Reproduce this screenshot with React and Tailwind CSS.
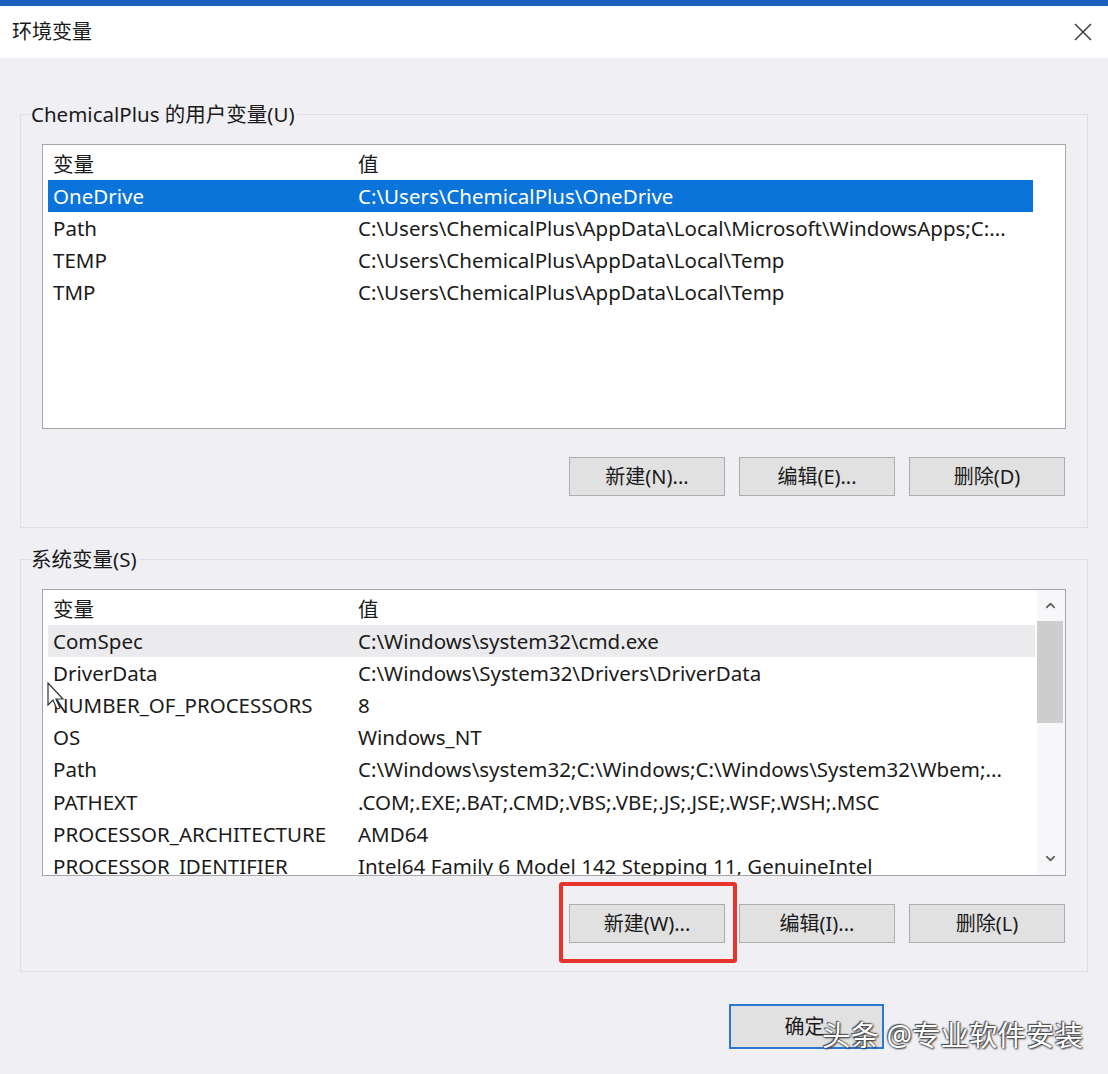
import { ChevronUp, ChevronDown } from 'lucide-react'

const FONT = "font-['Noto_Sans','Noto_Sans_CJK_SC',sans-serif]"

const USER_VARS = [
  ['OneDrive', 'C:\\Users\\ChemicalPlus\\OneDrive'],
  ['Path', 'C:\\Users\\ChemicalPlus\\AppData\\Local\\Microsoft\\WindowsApps;C:...'],
  ['TEMP', 'C:\\Users\\ChemicalPlus\\AppData\\Local\\Temp'],
  ['TMP', 'C:\\Users\\ChemicalPlus\\AppData\\Local\\Temp'],
]

const SYS_VARS = [
  ['ComSpec', 'C:\\Windows\\system32\\cmd.exe'],
  ['DriverData', 'C:\\Windows\\System32\\Drivers\\DriverData'],
  ['NUMBER_OF_PROCESSORS', '8'],
  ['OS', 'Windows_NT'],
  ['Path', 'C:\\Windows\\system32;C:\\Windows;C:\\Windows\\System32\\Wbem;...'],
  ['PATHEXT', '.COM;.EXE;.BAT;.CMD;.VBS;.VBE;.JS;.JSE;.WSF;.WSH;.MSC'],
  ['PROCESSOR_ARCHITECTURE', 'AMD64'],
  ['PROCESSOR_IDENTIFIER', 'Intel64 Family 6 Model 142 Stepping 11, GenuineIntel'],
]

function Row({ name, value, selected, hover }) {
  const tone = selected
    ? 'bg-[#0a74da] text-white'
    : hover
      ? 'bg-[#ebebee] text-[#1a1a1a]'
      : 'text-[#1a1a1a]'
  return (
    <div className={`flex h-[32.2px] shrink-0 items-center pl-[5px] ${tone}`}>
      <div className="w-[305px] shrink-0 whitespace-nowrap">{name}</div>
      <div className="min-w-0 flex-1 overflow-hidden whitespace-nowrap">{value}</div>
    </div>
  )
}

function Header() {
  return (
    <div className="flex h-[32px] shrink-0 items-center pl-[5px] text-[#1a1a1a]">
      <div className="w-[305px] shrink-0">变量</div>
      <div>值</div>
    </div>
  )
}

function Btn({ children }) {
  return (
    <button className="flex h-[39px] w-full items-center justify-center border border-[#adadad] bg-[#e1e1e1] text-[20px] text-[#1a1a1a]">
      {children}
    </button>
  )
}

function ButtonRow({ labels, marked }) {
  return (
    <div className="mt-[28px] flex justify-end gap-[14px] pr-[1px]">
      {labels.map((l, i) => (
        <div key={l} className="relative w-[156px]">
          <Btn>{l}</Btn>
          {marked && i === 0 && (
            <div className="pointer-events-none absolute -top-[22px] -bottom-[20px] -left-[10px] -right-[12px] rounded-[3px] border-[4px] border-[#e8322c]" />
          )}
        </div>
      ))}
    </div>
  )
}

function Group({ label, className, children }) {
  return (
    <fieldset className={`mx-[20px] border border-[#dedee4] px-[21px] pt-[18px] ${className}`}>
      <legend className="-ml-[11px] pr-[2px] text-[20.5px] leading-[24px] text-[#1a1a1a]">{label}</legend>
      {children}
    </fieldset>
  )
}

export default function App() {
  return (
    <div className={`relative flex h-[1074px] w-[1108px] flex-col overflow-hidden bg-[#f0eff4] ${FONT}`}>
      {/* title bar */}
      <div className="flex h-[58px] shrink-0 items-center justify-between border-t-[6px] border-[#1b5fbf] bg-white pl-[12px] pr-[16px]">
        <span className="text-[20px] text-[#1a1a1a]">环境变量</span>
        <svg width="18" height="18" viewBox="0 0 18 18" className="text-[#333]">
          <path d="M1 1 L17 17 M17 1 L1 17" stroke="currentColor" strokeWidth="1.4" fill="none" />
        </svg>
      </div>

      {/* user variables */}
      <Group label="ChemicalPlus 的用户变量(U)" className="mt-[44px] pb-[31px]">
        <div className="flex h-[285px] flex-col overflow-hidden border border-[#a6a6a6] bg-white pl-[5px] pr-[32px] pt-[3px] text-[20.5px]">
          <Header />
          {USER_VARS.map(([n, v], i) => (
            <Row key={n} name={n} value={v} selected={i === 0} />
          ))}
        </div>
        <ButtonRow labels={['新建(N)...', '编辑(E)...', '删除(D)']} />
      </Group>

      {/* system variables */}
      <Group label="系统变量(S)" className="mt-[19px] pb-[28px]">
        <div className="relative flex h-[287px] overflow-hidden border border-[#a6a6a6] bg-white text-[20.5px]">
          <div className="flex min-w-0 flex-1 flex-col overflow-hidden pl-[5px] pr-[2px] pt-[3px]">
            <Header />
            {SYS_VARS.map(([n, v], i) => (
              <Row key={n} name={n} value={v} hover={i === 0} />
            ))}
          </div>
          {/* scrollbar */}
          <div className="flex w-[28px] shrink-0 flex-col bg-[#f7f7f9] pr-[2px]">
            <div className="flex h-[31px] items-center justify-center text-[#555]">
              <ChevronUp size={15} strokeWidth={2.5} />
            </div>
            <div className="h-[102px] bg-[#cdcdcd]" />
            <div className="flex-1" />
            <div className="flex h-[34px] items-center justify-center text-[#555]">
              <ChevronDown size={15} strokeWidth={2.5} />
            </div>
          </div>
          {/* mouse pointer */}
          <svg width="20" height="30" viewBox="0 0 20 30" className="absolute left-[4px] top-[92px]">
            <path d="M1 1 L1 23 L6 18 L10 27 L13 26 L9 17 L16 17 Z" fill="white" stroke="#333" strokeWidth="1.2" />
          </svg>
        </div>
        <ButtonRow labels={['新建(W)...', '编辑(I)...', '删除(L)']} marked />
      </Group>

      {/* footer */}
      <div className="mt-[32px] flex justify-end pr-[224px]">
        <button className="flex h-[45px] w-[155px] items-center justify-center border-2 border-[#2a78cf] bg-[#e1e1e1] text-[20px] text-[#1a1a1a]">
          <span className="-ml-[4px]">确定</span>
        </button>
      </div>

      {/* watermark */}
      <div className="pointer-events-none absolute left-[822px] top-[1015px] text-[28.5px] leading-[40px] text-white [text-shadow:0_0_2px_#333,1px_1px_2px_#333,-1px_-1px_1px_#555]">
        头条 @专业软件安装
      </div>
    </div>
  )
}
